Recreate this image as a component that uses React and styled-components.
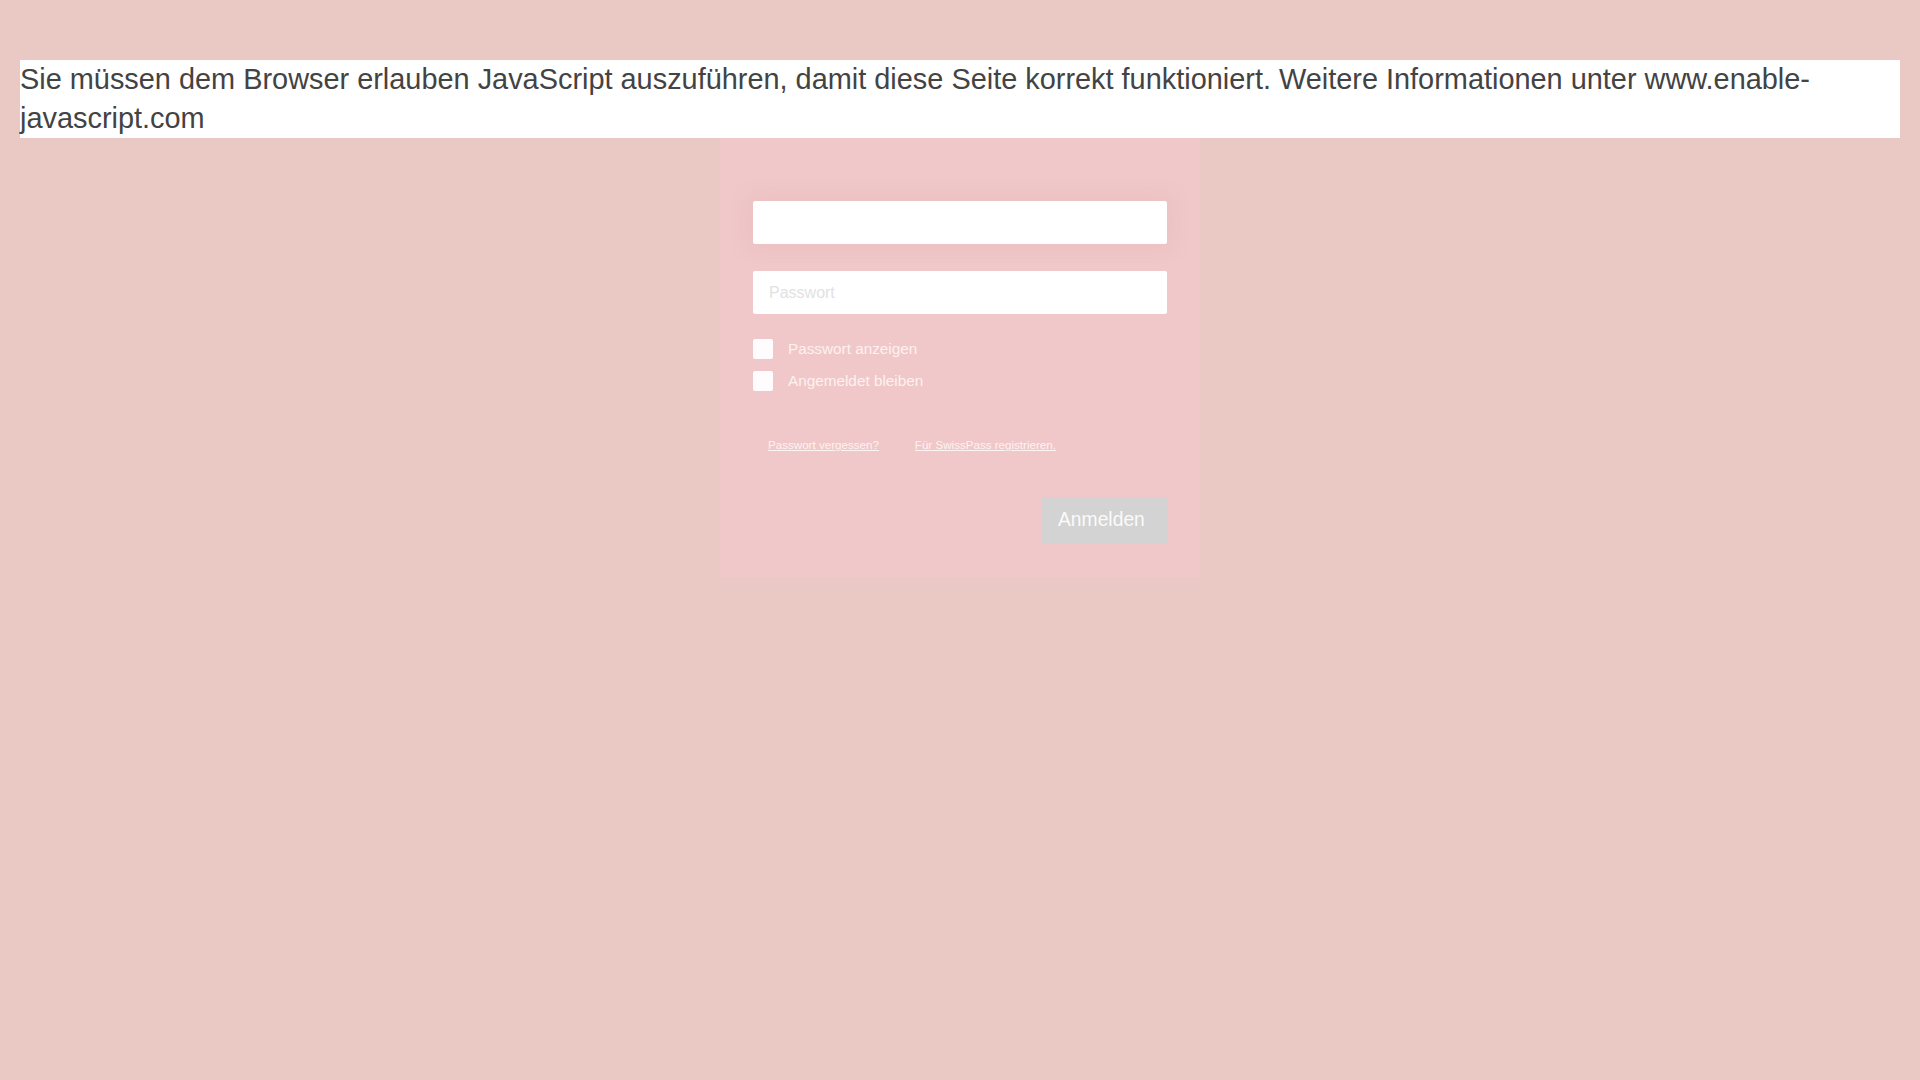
import { createGlobalStyle, styled } from "styled-components";

const GlobalStyle = createGlobalStyle`
  html, body {
    margin: 0;
    padding: 0;
    background: #eac9c4;
    font-family: "Helvetica Neue", "Liberation Sans", Arial, sans-serif;
  }
  * {
    box-sizing: border-box;
  }
`;

const Page = styled.div`
  min-height: 1080px;
  padding: 60px 20px 0;
`;

const NoScript = styled.div`
  background: #fff;
  color: #434343;
  font-size: 28.9px;
  line-height: 39px;
`;

const Panel = styled.form`
  width: 480px;
  margin: 0 auto;
  padding: 63px 33px 33px;
  background: #f0c8c9;
  display: flex;
  flex-direction: column;
`;

const Field = styled.input`
  width: 100%;
  height: 43px;
  border: none;
  border-radius: 2px;
  background: #fff;
  padding: 0 16px;
  font-family: inherit;
  font-size: 16px;
  color: #333;
  outline: none;
  margin-bottom: ${(props) => props.$gap || 0}px;
  box-shadow: ${(props) =>
    props.$focused ? "0 0 18px 6px rgba(214, 160, 160, 0.18)" : "none"};

  &::placeholder {
    color: #e2e2e2;
  }
`;

const Options = styled.div`
  display: flex;
  flex-direction: column;
  gap: 12px;
  margin-bottom: 46px;
`;

const CheckRow = styled.label`
  display: flex;
  align-items: center;
  gap: 15px;
  height: 20px;
  color: #fdf1f1;
  font-size: 15.3px;
  cursor: pointer;
`;

const Box = styled.span`
  width: 20px;
  height: 20px;
  border-radius: 2px;
  background: #fefcfc;
  flex-shrink: 0;
`;

const Links = styled.div`
  display: flex;
  gap: 36px;
  padding-left: 15px;
  margin-bottom: 44px;
`;

const Link = styled.a`
  color: #fdf3f3;
  font-size: 11.6px;
  line-height: 16px;
  text-decoration: underline;
  cursor: pointer;
`;

const Actions = styled.div`
  display: flex;
  justify-content: flex-end;
`;

const Submit = styled.button`
  width: 125px;
  height: 47px;
  border: none;
  background: #d3d3d3;
  color: #fafafa;
  font-family: inherit;
  font-size: 19.3px;
  text-align: left;
  padding: 0 0 1px 16px;
  cursor: pointer;
`;

const App = () => {
  return (
    <>
      <GlobalStyle />
      <Page>
        <NoScript>
          Sie müssen dem Browser erlauben JavaScript auszuführen, damit diese
          Seite korrekt funktioniert. Weitere Informationen unter
          www.enable-javascript.com
        </NoScript>
        <Panel onSubmit={(e) => e.preventDefault()}>
          <Field type="text" $gap={27} $focused />
          <Field type="password" placeholder="Passwort" $gap={25} />
          <Options>
            <CheckRow>
              <Box />
              Passwort anzeigen
            </CheckRow>
            <CheckRow>
              <Box />
              Angemeldet bleiben
            </CheckRow>
          </Options>
          <Links>
            <Link>Passwort vergessen?</Link>
            <Link>Für SwissPass registrieren.</Link>
          </Links>
          <Actions>
            <Submit type="submit">Anmelden</Submit>
          </Actions>
        </Panel>
      </Page>
    </>
  );
};

export default App;
